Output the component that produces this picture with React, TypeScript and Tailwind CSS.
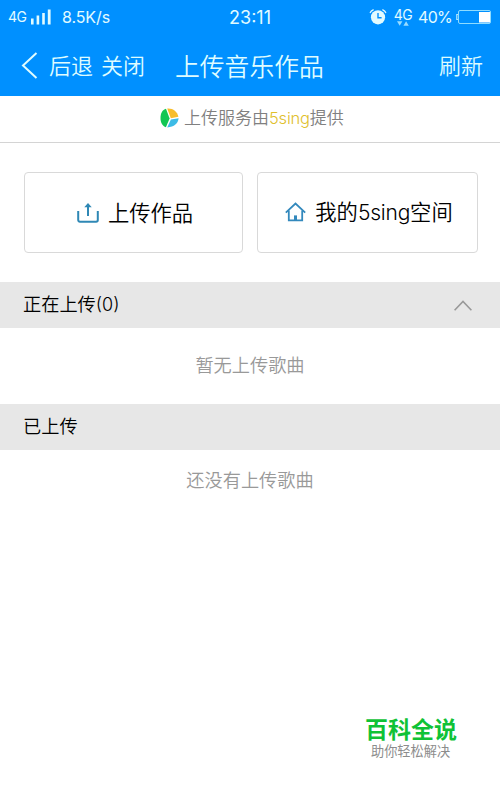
import type { ReactNode } from 'react';

const StatusBar = () => (
  <div className="relative flex h-[34px] items-center text-[#e2fbff] font-['Inter','Noto_Sans_CJK_SC',sans-serif]">
    <span className="ml-2 w-[18px] text-[14px] leading-none tracking-[-0.6px]">4G</span>
    <svg className="ml-[5px] h-[16px] w-[20px]" viewBox="0 0 20 16" fill="currentColor">
      <rect x="0" y="9.5" width="2.6" height="6" />
      <rect x="5.6" y="6.5" width="2.6" height="9" />
      <rect x="11.2" y="4" width="2.6" height="11.5" />
      <rect x="16.8" y="0.5" width="2.8" height="15" />
    </svg>
    <span className="ml-[11px] text-[16px] leading-none tracking-[-0.1px]">8.5K/s</span>

    <span className="absolute left-1/2 top-[9px] -translate-x-1/2 text-[18px] leading-[18px]">23:11</span>

    <div className="ml-auto flex h-full items-center">
      {/* Alarm */}
      <svg className="h-[18px] w-[18px]" viewBox="0 0 18 18" fill="none" stroke="currentColor">
        <circle cx="9" cy="9.3" r="7.1" fill="currentColor" stroke="none" />
        <path d="M1.3 4.6C1.8 3.4 2.8 2.4 4.2 1.8M16.7 4.6C16.2 3.4 15.2 2.4 13.8 1.8" strokeWidth="1.3" strokeLinecap="round" />
        <path d="M9 5v4.8h3.6" stroke="#0090ff" strokeWidth="1.4" />
      </svg>
      <div className="ml-[7px] flex w-[18px] flex-col items-center">
        <span className="text-[14px] leading-[13px] tracking-[-0.5px]">4G</span>
        <svg className="h-[5px] w-[12px] text-[#9adcff]" viewBox="0 0 12 5" fill="currentColor">
          <path d="M0 0.3h5.4L2.7 4.8z" />
          <path d="M6.4 4.8h5.4L9.1 0.3z" />
        </svg>
      </div>
      <span className="ml-[6px] w-[33px] text-[16px] leading-none tracking-[-0.7px]">40%</span>
      <svg className="ml-[4px] mr-[8px] h-[16px] w-[37px]" viewBox="0 0 37 16" fill="none">
        <path d="M3 5.5H1.8v5H3" stroke="#b4e8ff" strokeWidth="1.2" />
        <rect x="3.5" y="1.5" width="32" height="13" rx="1.5" stroke="#8fdcff" />
        <rect x="24" y="3" width="11" height="10.5" fill="#fff" />
      </svg>
    </div>
  </div>
);

const NavBar = () => (
  <div className="relative flex h-[62px] items-center text-[22px] font-[350] text-[#dffcff]">
    <svg className="ml-[21px] h-[27px] w-[17px]" viewBox="0 0 17 27" fill="none" stroke="currentColor" strokeWidth="2">
      <path d="M15.5 1 2 13.5 15.5 26" />
    </svg>
    <span className="-mt-[1px] ml-[11px]">后退</span>
    <span className="-mt-[1px] ml-[8px]">关闭</span>
    <h1 className="absolute left-[175px] top-[13px] text-[24.8px] leading-[36px]">上传音乐作品</h1>
    <span className="-mt-[1px] ml-auto mr-[17px]">刷新</span>
  </div>
);

const ActionButton = ({ icon, className, children }: { icon: ReactNode; className: string; children: ReactNode }) => (
  <button
    className={`flex h-[81px] items-center justify-center gap-[9px] rounded-[4px] border border-[#d9d9d9] bg-white pl-[3px] text-[21.3px] font-[350] text-black ${className}`}
  >
    {icon}
    <span className="-mt-[1px]">{children}</span>
  </button>
);

const SectionHeader = ({ title, children }: { title: ReactNode; children?: ReactNode }) => (
  <div className="flex h-[46px] items-center justify-between bg-[#e7e7e7] pl-[23px] pr-[28px] text-[18.2px] font-[350] text-black">
    <span className="-mt-[3px]">{title}</span>
    {children}
  </div>
);

const App = () => {
  return (
    <div className="flex h-[790px] w-[500px] flex-col overflow-hidden bg-white font-['Noto_Sans_CJK_SC',sans-serif]">
      <header className="bg-[#0090ff]">
        <StatusBar />
        <NavBar />
      </header>

      {/* Provider line */}
      <div className="flex h-[47px] items-center border-b border-[#d4d4d4] pl-[160px] text-[17px] font-[350] text-[#808080]">
        <svg className="-mt-[3px] mr-[5px] h-[20px] w-[19px]" viewBox="0 0 19 20">
          <path d="M6 0.7C2.4 1.6 0.5 5.4 0.5 10c0 4.600 2 8.200 5.400 9.200L9.600 10.500z" fill="#12c653" />
          <path d="M7.200 0.600c5.600-.5 10 2.900 11.200 8.200l-7.600 1.400z" fill="#f7bd2c" />
          <path d="M10.900 11.600l7.700-1.300c-.4 5-4.400 8.800-11.400 9.100z" fill="#3dbbe6" />
        </svg>
        <p className="-mt-[3px]">
          上传服务由<span className="font-['Inter'] text-[16.5px] tracking-[-0.2px] text-[#dfc02c]">5sing</span>提供
        </p>
      </div>

      <div className="flex gap-[14px] pb-[29px] pl-[24px] pr-[22px] pt-[29px]">
        <ActionButton
          className="w-[219px]"
          icon={
            <svg className="-mt-[1px] h-[21px] w-[22px]" viewBox="0 0 22 21" fill="none" stroke="#2f88b5" strokeWidth="2">
              <path d="M1.2 9v9a1.700 1.700 0 0 0 1.700 1.700h16.200a1.700 1.700 0 0 0 1.700-1.700V9" />
              <path d="M11 14V3" />
              <path d="M7.300 5.200 11 1l3.700 4.200z" fill="#2f88b5" stroke="none" />
            </svg>
          }
        >
          上传作品
        </ActionButton>
        <ActionButton
          className="flex-1"
          icon={
            <svg className="-mt-[1px] h-[20px] w-[21px]" viewBox="0 0 21 20" fill="none" stroke="#3389bd" strokeWidth="1.8">
              <path d="M0.8 10.600 10.500 1.600l9.700 9" />
              <path d="M3.800 8.500v9.900h13.400V8.500" />
              <path d="M10.500 13.400v5" strokeWidth="3" />
            </svg>
          }
        >
          我的<span className="font-['Inter'] text-[21px] tracking-[-0.2px]">5sing</span>空间
        </ActionButton>
      </div>

      <SectionHeader
        title={
          <>
            正在上传<span className="font-['Inter'] text-[18px]">(0)</span>
          </>
        }
      >
        <svg className="h-[11px] w-[18px]" viewBox="0 0 18 11" fill="none" stroke="#999" strokeWidth="1.6">
          <path d="M0.6 10.200 9 1.400l8.400 8.800" />
        </svg>
      </SectionHeader>
      <p className="flex h-[76px] items-center justify-center pb-[3px] text-[18.2px] font-[350] text-[#999]">暂无上传歌曲</p>

      <SectionHeader title="已上传" />
      <p className="flex h-[60px] items-center justify-center pb-[1px] text-[18.2px] font-[350] text-[#999]">还没有上传歌曲</p>

      {/* Watermark */}
      <div className="mb-[29px] ml-[365px] mt-auto w-[93px]">
        <p className="text-[23px] font-bold leading-[24px] text-[#0fc236]">百科全说</p>
        <p className="ml-[6px] text-[13.2px] leading-[21px] text-[#8c8c8c]">助你轻松解决</p>
      </div>
    </div>
  );
};

export default App;
